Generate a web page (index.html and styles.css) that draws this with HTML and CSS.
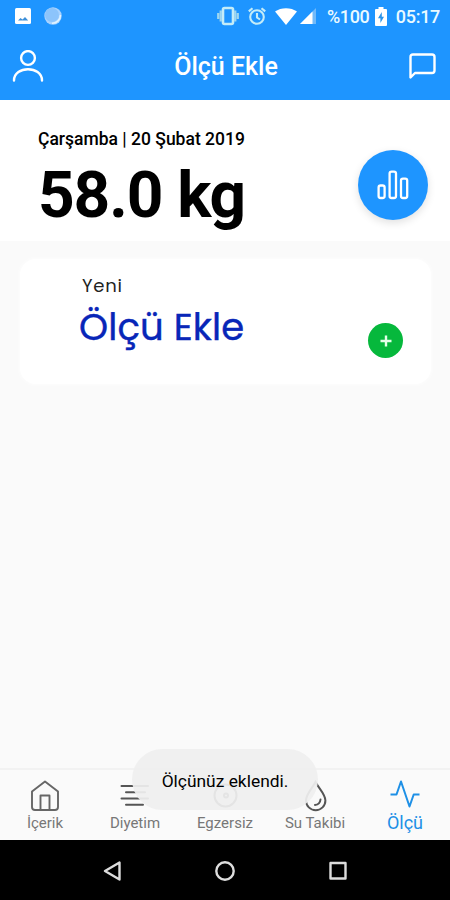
FILE: index.html
```
<!DOCTYPE html>
<html lang="tr">
<head>
 <meta charset="UTF-8">
 <meta name="viewport" content="width=device-width, initial-scale=1">
 <title>Ölçü Ekle</title>
 <link rel="stylesheet" href="styles.css">
</head>
<body>
<div class="status">
  <svg class="s-photo" width="16" height="16" viewBox="0 0 16 16"><rect width="16" height="16" rx="1.5" fill="#fff"/><path d="M3 12.500l2.500-2.500 2 1.500 2.500-2.500 3.200 3.500z" fill="#3c8fd8"/></svg>
  <svg class="s-sync" width="18" height="18" viewBox="0 0 18 18"><circle cx="9" cy="9" r="8.700" fill="#a9d3ff"/><circle cx="8" cy="8" r="7" fill="#8cc4fb"/><path d="M8 16.200A8 8 0 0 0 16.400 8" fill="none" stroke="#e0f3ff" stroke-width="1.600"/></svg>
  <svg class="s-vibrate" width="22" height="20" viewBox="0 0 22 20"><path d="M1.200 7v6M3.700 4.500v11M20.800 7v6M18.300 4.500v11" stroke="#9ed6ef" stroke-width="2.200"/><rect x="6" y="2" width="10" height="16" rx="1.500" fill="none" stroke="#c4ecf8" stroke-width="2.600"/></svg>
  <svg class="s-alarm" width="18" height="18" viewBox="0 0 18 18" fill="none" stroke="#c4ecf8" stroke-width="2.100"><circle cx="9" cy="10" r="6.800"/><path d="M9 6v4.500l3 2M.8 4.400L4.500 1.200M17.200 4.400L13.500 1.200"/></svg>
  <svg class="s-wifi" width="22" height="17" viewBox="0 0 22 17"><path d="M0 3.600C6-1 16-1 22 3.600L11 17z" fill="#fff"/></svg>
  <svg class="s-signal" width="16" height="16" viewBox="0 0 16 16"><path d="M0 16L16 0v16z" fill="#71bafa"/><path d="M0 16L12.500 3.500V16z" fill="#fff"/></svg>
  <span class="pct">%100</span>
  <svg class="s-battery" width="12" height="19" viewBox="0 0 12 19"><path d="M3.500 0h5v2H11a1 1 0 0 1 1 1v15a1 1 0 0 1-1 1H1a1 1 0 0 1-1-1V3a1 1 0 0 1 1-1h2.500z" fill="#fff"/><path d="M6.800 5L3 11.300h2.400V16L9 9.700H6.800z" fill="#2a93ea"/></svg>
  <span class="clock">05:17</span>
</div>
<div class="header">
  <svg width="32" height="32" viewBox="0 0 32 32" fill="none" stroke="#fff" stroke-width="2.400" stroke-linecap="round"><circle cx="16" cy="8" r="6.900"/><path d="M2 30.500C2 15.500 30 15.500 30 30.500"/></svg>
  <h1>Ölçü Ekle</h1>
  <svg width="27" height="27" viewBox="0 0 27 27" fill="none" stroke="#fff" stroke-width="2.400" stroke-linejoin="round"><path d="M1.500 24.500V4q0-2.500 2.500-2.500h19q2.500 0 2.500 2.500v13.500q0 2.500-2.500 2.500H6z"/></svg>
</div>
<div class="weight">
  <div>
    <div class="date">Çarşamba | 20 Şubat 2019</div>
    <div class="kg">58.0 kg</div>
  </div>
  <div class="chart">
    <svg width="32" height="30" viewBox="0 0 32 30" fill="none" stroke="#fff" stroke-width="2.300"><rect x="1.600" y="15.500" width="6" height="12.500" rx="2"/><rect x="12.600" y="1.600" width="6.400" height="26.400" rx="2"/><rect x="24" y="8.600" width="6.200" height="19.400" rx="2"/></svg>
  </div>
</div>
<div class="main">
  <div class="card">
    <div>
      <div class="new">Yeni</div>
      <div class="add-title">Ölçü Ekle</div>
    </div>
    <div class="plus"><svg width="12" height="12" viewBox="0 0 12 12" stroke="#e4ffe8" stroke-width="2.400"><path d="M6 .5v11M.5 6h11"/></svg></div>
  </div>
</div>
<div class="tabs">
  <div class="tab">
    <svg width="30" height="32" viewBox="0 0 30 32" fill="none" stroke="#666" stroke-width="1.900" stroke-linejoin="round"><path d="M2 11.500L15 1.500l13 10V27q0 3-3 3H5q-3 0-3-3z"/><path d="M10.500 30V15.500h9V30"/></svg>
    <span>İçerik</span>
  </div>
  <div class="tab">
    <svg width="30" height="32" viewBox="0 0 30 32" fill="none" stroke="#555" stroke-width="2" stroke-linecap="round"><path d="M1.500 6H28M6 12.300h19M1.500 18.500H28M6 24.700h17"/></svg>
    <span>Diyetim</span>
  </div>
  <div class="tab">
    <svg width="30" height="32" viewBox="0 0 30 32" fill="none" stroke="#555" stroke-width="2"><circle cx="15.500" cy="15.500" r="11"/><circle cx="16" cy="15.500" r="2"/></svg>
    <span>Egzersiz</span>
  </div>
  <div class="tab">
    <svg width="30" height="32" viewBox="0 0 30 32" fill="none" stroke="#555" stroke-width="2" stroke-linecap="round"><path d="M15.500 2C12.500 8 6 14 6 20.500a9.700 9.700 0 0 0 19.400 0C25.400 14 18.500 8 15.500 2z"/><path d="M20.500 19.500q-.5 5-5.500 5.500"/></svg>
    <span>Su Takibi</span>
  </div>
  <div class="tab active">
    <svg width="30" height="32" viewBox="0 0 30 32" fill="none" stroke="#1e90e6" stroke-width="2" stroke-linejoin="round"><path d="M.5 14.500h6L11 1.500l8.500 25 4.200-12h5.800"/></svg>
    <span>Ölçü</span>
  </div>
  <div class="toast">Ölçünüz eklendi.</div>
</div>
<div class="nav">
  <svg width="20" height="20" viewBox="0 0 20 20"><path d="M17.500 1.500v17L3 10z"/></svg>
  <svg width="20" height="20" viewBox="0 0 20 20"><circle cx="10" cy="10" r="8.700"/></svg>
  <svg width="20" height="20" viewBox="0 0 20 20"><rect x="2.500" y="2" width="15" height="15.500"/></svg>
</div>
</body>
</html>
```
FILE: styles.css
```
* { box-sizing: border-box; }
body { margin: 0; width: 450px; height: 900px; background: #fafafa; color: #000;
  font-family: Roboto, "Liberation Sans", sans-serif;
  display: flex; flex-direction: column; overflow: hidden; }
svg { display: block; flex: none; }

.status { height: 32px; background: #1e95ff; color: #eafaff;
  display: flex; align-items: center; padding: 0 10px 0 15px;
  font-size: 18px; font-weight: 500; white-space: nowrap; }
.s-sync { margin-left: 13px; }
.s-vibrate { margin-left: 155px; }
.s-alarm { margin-left: 9px; }
.s-wifi { margin-left: 9px; }
.s-signal { margin-left: 3px; }
.pct { width: 43px; margin-left: 11px; letter-spacing: -.4px; }
.s-battery { margin-left: 5px; }
.clock { margin-left: auto; letter-spacing: -.3px; }

.header { height: 68px; background: #1e95ff; color: #fff;
  display: flex; align-items: center; justify-content: space-between;
  padding: 0 14px 0 12px; }
.header h1 { margin: 2px 1px 0 0; font-size: 25px; font-weight: 500; line-height: 30px; }

.weight { height: 141px; background: #fff; padding: 28px 22px 0 38px;
  display: flex; justify-content: space-between; }
.date { font-size: 17.5px; font-weight: 500; line-height: 22px; white-space: nowrap; }
.kg { font-size: 64px; font-weight: 700; line-height: 76px; margin-top: 8px;
  letter-spacing: -1.1px; white-space: nowrap; }
.chart { width: 70px; height: 70px; margin-top: 22px; border-radius: 50%;
  background: #1e95ff; box-shadow: 0 3px 8px rgba(0,0,0,.12);
  display: flex; align-items: center; justify-content: center; }

.main { flex: 1; padding: 18px 19px 0 20px; }
.card { height: 125px; background: #fff; border-radius: 16px;
  box-shadow: 0 0 5px #fff; padding: 15px 28px 0 59px;
  display: flex; justify-content: space-between; }
.new, .add-title { font-family: Poppins, Inter, sans-serif; white-space: nowrap; }
.new { font-size: 18px; line-height: 24px; margin-left: 3px; color: #222; letter-spacing: .8px; }
.add-title { font-size: 37px; line-height: 46px; margin-top: 6px; color: #0826b8;
  letter-spacing: .1px; -webkit-text-stroke: .4px #0826b8; }
.plus { width: 35px; height: 35px; margin-top: 49px; border-radius: 50%;
  background: #06b83c; display: flex; align-items: center; justify-content: center; }

.tabs { height: 72px; border-top: 2px solid #f2f2f2; position: relative;
  display: flex; background: #fafafa; }
.tab { width: 90px; padding-top: 10px; display: flex; flex-direction: column;
  align-items: center; color: #777; font-size: 15px; line-height: 20px; }
.tab span { margin-top: 1px; }
.active { color: #1e90e6; font-size: 18px; }
/* toast floats over the tab bar */
.toast { position: absolute; left: 132px; top: -21px; width: 186px; height: 61px;
  border-radius: 31px; background: rgba(239,239,239,.93); font-size: 17.4px;
  padding-top: 2px; display: flex; align-items: center; justify-content: center; white-space: nowrap; }

.nav { height: 60px; background: #000; display: flex; align-items: center;
  justify-content: space-between; padding: 1px 102px 0; }
.nav svg { fill: none; stroke: #ddd; stroke-width: 2.4; stroke-linejoin: round; }
```
